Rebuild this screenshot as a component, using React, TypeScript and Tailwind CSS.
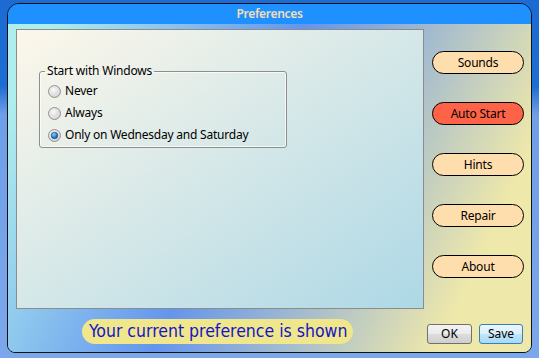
import React from 'react';

const ui = { fontFamily: '"Noto Sans", "Open Sans", sans-serif' };

function Radio({ checked }: { checked?: boolean }) {
    return (
        <svg width="13" height="13" viewBox="0 0 13 13" className="shrink-0">
            <defs>
                <radialGradient id={checked ? 'rc-on' : 'rc-off'} cx="0.4" cy="0.35" r="0.7">
                    <stop offset="0" stopColor="#fbfbfb" />
                    <stop offset="1" stopColor="#c9c9c9" />
                </radialGradient>
                <radialGradient id="rc-dot" cx="0.4" cy="0.35" r="0.7">
                    <stop offset="0" stopColor="#8fd0f8" />
                    <stop offset="0.6" stopColor="#2c7cc8" />
                    <stop offset="1" stopColor="#1a4f90" />
                </radialGradient>
            </defs>
            <circle cx="6.5" cy="6.5" r="6" fill={`url(#${checked ? 'rc-on' : 'rc-off'})`} stroke="#949494" />
            <circle cx="6.5" cy="6.5" r="4.2" fill="none" stroke="#e6e6e6" strokeWidth="0.8" />
            {checked && <circle cx="6.5" cy="6.5" r="3.3" fill="url(#rc-dot)" stroke="#1d4d85" strokeWidth="0.6" />}
        </svg>
    );
}

function PillButton({ label, hot }: { label: string; hot?: boolean }) {
    return (
        <div
            className={`flex h-[23px] w-[92px] items-center justify-center rounded-full border border-black text-[12px] tracking-[-0.2px] text-black ${hot ? 'bg-[#ff6347]' : 'bg-[#ffdead]'}`}
        >
            {label}
        </div>
    );
}

export default function App() {
    const options = ['Never', 'Always', 'Only on Wednesday and Saturday'];
    return (
        <div className="h-[358px] w-[539px] overflow-hidden bg-[linear-gradient(to_bottom,#1b6bd2_0%,#1c6dd4_24%,#6f9fe8_32%,#7ba7ec_100%)] pl-[7px] pt-[3px]" style={ui}>
            <div className="flex h-[350px] w-[525px] flex-col overflow-hidden rounded-t-[12px] rounded-b-[8px] border border-[#111]">
                <div className="flex h-[20px] items-center justify-center bg-[#1e90ff] text-[12px] font-semibold tracking-[-0.3px] text-[#f5deb3]">
                    Preferences
                </div>
                <div className="flex flex-1 flex-col bg-[linear-gradient(115deg,#afeeee_6%,#6495ed_44%,#eee8aa_86%)] pl-[8px] pr-[6px] pt-[5px]">
                    <div className="flex">
                        <div className="h-[280px] w-[408px] border border-[#8c8c8c] bg-[linear-gradient(to_bottom_right,#fdf7ea,#add8e6)] pl-[22px] pt-[34px]">
                            <fieldset className="w-[248px] rounded-[3px] border border-[#8e8e8e] px-[5px] pb-[5px] shadow-[inset_0_0_0_1px_rgba(255,255,255,0.7)]">
                                <legend className="px-[2px] text-[12px] leading-[14px] tracking-[-0.2px] text-black">Start with Windows</legend>
                                <div className="flex flex-col gap-[8px] pl-[3px] pt-[6px]">
                                    {options.map((o, i) => (
                                        <div key={o} className="flex h-[14px] items-center gap-[4px] text-[12px] tracking-[-0.22px] text-black">
                                            <Radio checked={i === 2} />
                                            <span>{o}</span>
                                        </div>
                                    ))}
                                </div>
                            </fieldset>
                        </div>
                        <div className="ml-[8px] mt-[22px] flex flex-col gap-[28px]">
                            <PillButton label="Sounds" />
                            <PillButton label="Auto Start" hot />
                            <PillButton label="Hints" />
                            <PillButton label="Repair" />
                            <PillButton label="About" />
                        </div>
                    </div>
                    <div className="mt-[10px] flex items-end">
                        <div
                            className="ml-[66px] flex h-[25px] w-[271px] items-center rounded-full bg-[#f0e68c] pl-[7px] text-[17.5px] text-[#1414c8]"
                            style={{ fontFamily: '"DejaVu Sans Condensed", "DejaVu Sans", sans-serif', fontStretch: 'condensed' }}
                        >
                            Your current preference is shown
                        </div>
                        <div className="ml-[74px] flex gap-[7px]">
                            <div className="flex h-[20px] w-[45px] items-center justify-center rounded-[3px] border border-[#707070] bg-[linear-gradient(to_bottom,#f2f2f2_0%,#ebebeb_50%,#dddddd_50%,#cfcfcf_100%)] text-[12px] text-black">
                                OK
                            </div>
                            <div className="flex h-[20px] w-[44px] items-center justify-center rounded-[3px] border border-[#3c7fb1] bg-[linear-gradient(to_bottom,#eaf6fd_0%,#d9f0fc_50%,#bee6fd_50%,#a7d9f5_100%)] text-[12px] text-black">
                                Save
                            </div>
                        </div>
                    </div>
                </div>
            </div>
        </div>
    );
}
